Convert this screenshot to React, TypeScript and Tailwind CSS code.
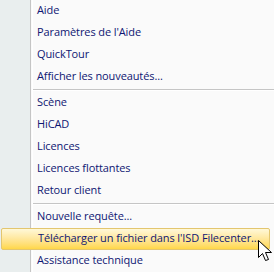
import React from "react";

type Entry = { label: string } | { sep: true };

const entries: Entry[] = [
  { label: "Aide" },
  { label: "Paramètres de l'Aide" },
  { label: "QuickTour" },
  { label: "Afficher les nouveautés..." },
  { sep: true },
  { label: "Scène" },
  { label: "HiCAD" },
  { label: "Licences" },
  { label: "Licences flottantes" },
  { label: "Retour client" },
  { sep: true },
  { label: "Nouvelle requête..." },
  { label: "Télécharger un fichier dans l'ISD Filecenter..." },
  { label: "Assistance technique" },
];

const HOVERED = "Télécharger un fichier dans l'ISD Filecenter...";

export default function App() {
  return (
    <div
      className="relative w-[274px] h-[272px] overflow-hidden bg-[#fafafa] text-[11px] tracking-[-0.1px] text-[#0e1672] whitespace-nowrap"
      style={{ fontFamily: '"Open Sans", "Liberation Sans", sans-serif' }}
    >
      {/* icon gutter */}
      <div className="absolute left-0 top-0 bottom-0 w-[31px] bg-[#e9eeee] border-r border-[#c5c5c5]" />
      <div className="absolute left-[32px] top-0 bottom-0 w-px bg-white" />

      <div className="relative flex flex-col">
        {entries.map((e, i) =>
          "sep" in e ? (
            <div key={i} className="h-[4px] pl-[33px] pt-px">
              <div className="h-px bg-[#c5c5c5]" />
              <div className="h-px bg-white" />
            </div>
          ) : e.label === HOVERED ? (
            <div
              key={i}
              className="ml-px mr-[4px] h-[22px] flex items-center pl-[36px] pb-px rounded-[2px] border border-[#e3c66f] bg-gradient-to-b from-[#fff8d8] via-[#ffe79a] to-[#ffd747]"
            >
              {e.label}
            </div>
          ) : (
            <div key={i} className="h-[22px] flex items-center pl-[37px] pb-px">
              {e.label}
            </div>
          )
        )}
      </div>

      {/* mouse cursor */}
      <svg
        className="absolute left-[258px] top-[240px]"
        width="15"
        height="23"
        viewBox="0 0 15 23"
      >
        <path
          d="M0.5 0.5 L0.5 17.5 L4.5 13.5 L7.5 20.5 L10.5 19.5 L7.5 12.5 L13.5 12.5 Z"
          fill="#fff"
          stroke="#000"
          strokeWidth="1"
          strokeLinejoin="miter"
        />
      </svg>
    </div>
  );
}
